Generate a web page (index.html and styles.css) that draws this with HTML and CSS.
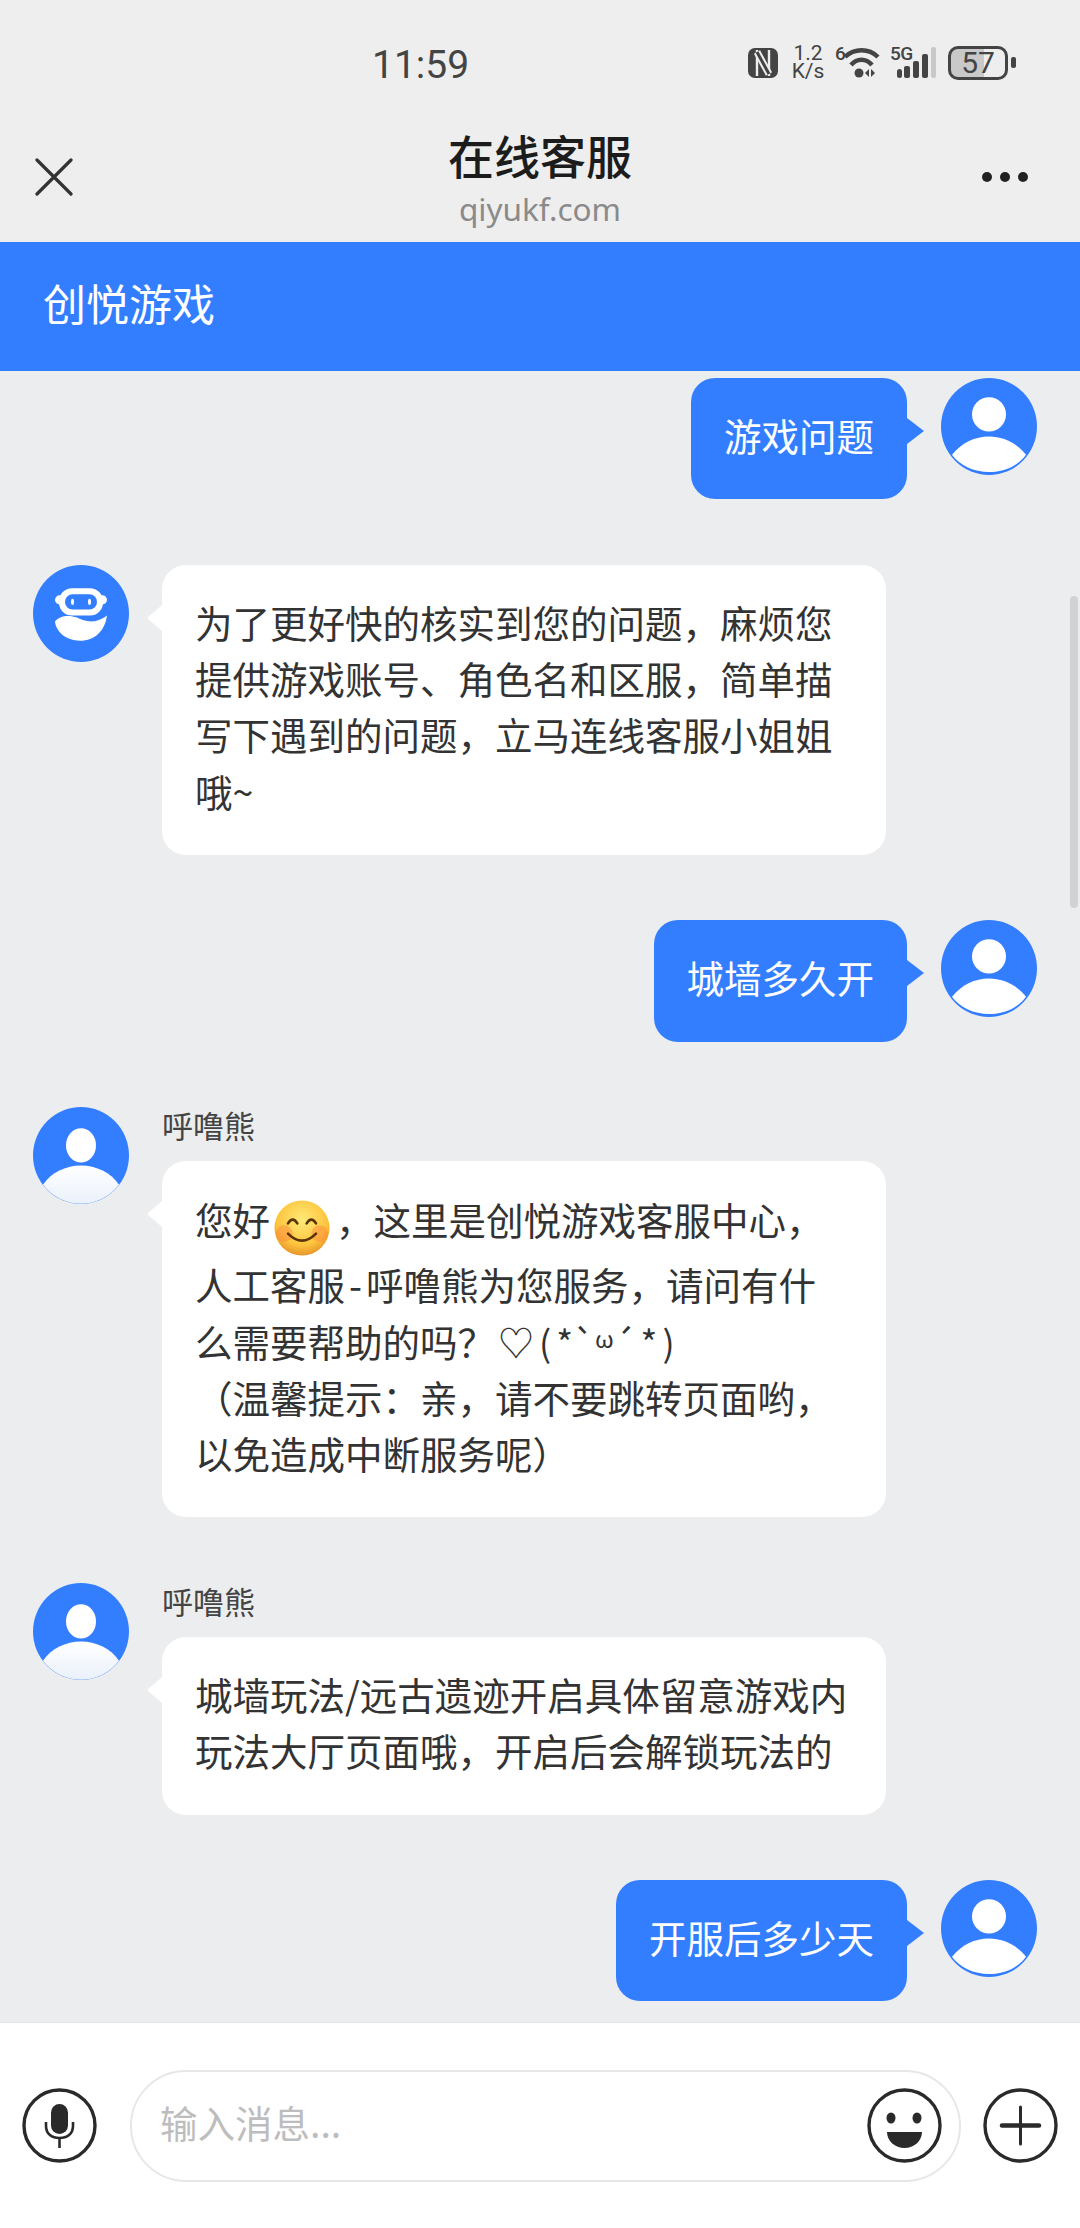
FILE: index.html
```html
<!DOCTYPE html>
<html lang="zh-CN">
<head>
  <meta charset="UTF-8">
  <meta name="viewport" content="width=device-width, initial-scale=1.0">
  <title>在线客服</title>
  <link rel="stylesheet" href="styles.css">
</head>
<body>
  <div class="status-bar">
    <span class="time">11:59</span>
    <div class="status-icons">
      <svg class="nfc" width="30" height="30" viewBox="0 0 30 30">
        <rect width="30" height="30" rx="7" fill="#444"/>
        <path d="M9 2V28M21 2V28" stroke="#eee" stroke-width="2.400"/>
        <path d="M9 4L21 26" stroke="#eee" stroke-width="7"/>
        <path d="M9 4L21 26" stroke="#444" stroke-width="3"/>
      </svg>
      <div class="speed"><span>1.2</span><span>K/s</span></div>
      <div class="wifi">
        <span class="tiny-label">6</span>
        <svg width="36" height="31" viewBox="0 0 36 31" fill="none" stroke="#444" stroke-width="4.500">
          <path d="M1 10C10 1 25 1 34 10"/>
          <path d="M7 18C13 11 22 11 28 18"/>
          <circle cx="15" cy="26" r="4.500" fill="#444" stroke="none"/>
          <path d="M25 22v8l-4-4zM27 22v8l4-4z" fill="#444" stroke="none"/>
        </svg>
      </div>
      <div class="signal">
        <span class="tiny-label">5G</span>
        <svg width="46" height="31" viewBox="0 0 46 31" fill="#444">
          <rect x="7" y="22" width="5" height="9" rx="2.500"/>
          <rect x="14" y="19" width="6" height="12" rx="2"/>
          <rect x="23" y="14" width="6" height="17" rx="2"/>
          <rect x="32" y="7" width="6" height="24" rx="2"/>
          <rect x="41" y="0" width="5" height="31" rx="2" fill="#c9c9c9"/>
        </svg>
      </div>
      <div class="battery">57</div>
      <div class="battery-nub"></div>
    </div>
  </div>

  <div class="nav-bar">
    <svg class="close-icon" width="38" height="38" viewBox="0 0 38 38" stroke="#333" stroke-width="3.200" stroke-linecap="round">
      <path d="M2 2L36 36M36 2L2 36"/>
    </svg>
    <div class="nav-title">
      <div class="nav-name">在线客服</div>
      <div class="nav-host">qiyukf.com</div>
    </div>
    <div class="more-dots"><i></i><i></i><i></i></div>
  </div>

  <header class="shop-header">创悦游戏</header>

  <main class="chat">
    <div class="scroll-thumb"></div>

    <div class="msg msg-me">
      <div class="bubble bubble-me">游戏问题</div>
      <svg class="avatar" viewBox="0 0 96 96" preserveAspectRatio="none"><use href="#me-face"/></svg>
    </div>

    <div class="msg">
      <svg class="avatar" viewBox="0 0 96 96" preserveAspectRatio="none">
        <circle cx="48" cy="48" r="48" fill="#337eff"/>
        <rect x="26" y="23" width="44" height="27" rx="13" fill="#fff"/>
        <rect x="22" y="30" width="52" height="9" rx="4.500" fill="#fff"/>
        <rect x="32" y="29" width="32" height="15" rx="7.500" fill="#337eff"/>
        <ellipse cx="39.500" cy="36.500" rx="1.500" ry="3" fill="#fff"/>
        <ellipse cx="56.500" cy="36.500" rx="1.500" ry="3" fill="#fff"/>
        <path d="M22 56C26 50 36 49 44 52C52 56 62 59 74 50C72 65 62 75 47 75C33 75 23 66 22 56Z" fill="#fff"/>
      </svg>
      <div class="msg-body">
        <div class="bubble bubble-other">为了更好快的核实到您的问题，麻烦您提供游戏账号、角色名和区服，简单描写下遇到的问题，立马连线客服小姐姐哦~</div>
      </div>
    </div>

    <div class="msg msg-me">
      <div class="bubble bubble-me">城墙多久开</div>
      <svg class="avatar" viewBox="0 0 96 96" preserveAspectRatio="none"><use href="#me-face"/></svg>
    </div>

    <div class="msg">
      <svg class="avatar" viewBox="0 0 96 96" preserveAspectRatio="none"><use href="#agent-face"/></svg>
      <div class="msg-body">
        <div class="sender">呼噜熊</div>
        <div class="bubble bubble-other">您好<svg class="smile" width="56" height="56" viewBox="0 0 60 60">
            <circle cx="30" cy="30" r="29.500" fill="url(#smile-fill)"/>
            <circle cx="11" cy="36" r="9" fill="#ff7a3c" opacity=".4"/>
            <circle cx="49" cy="36" r="9" fill="#ff7a3c" opacity=".4"/>
            <path d="M15 25Q20 17 25 25M35 25Q40 17 45 25M15 36Q30 51 45 36" fill="none" stroke="#5a3408" stroke-width="2.800" stroke-linecap="round"/>
          </svg>，这里是创悦游戏客服中心，人工客服<span class="dash">-</span>呼噜熊为您服务，请问有什<br>么需要帮助的吗？<span class="kaomoji">♡ ( *`<span class="kaomoji-mouth">ω</span>´ * )</span><br>（温馨提示：亲，请不要跳转页面哟，以免造成中断服务呢）</div>
      </div>
    </div>

    <div class="msg">
      <svg class="avatar" viewBox="0 0 96 96" preserveAspectRatio="none"><use href="#agent-face"/></svg>
      <div class="msg-body">
        <div class="sender">呼噜熊</div>
        <div class="bubble bubble-other">城墙玩法/远古遗迹开启具体留意游戏内玩法大厅页面哦，开启后会解锁玩法的</div>
      </div>
    </div>

    <div class="msg msg-me">
      <div class="bubble bubble-me">开服后多少天</div>
      <svg class="avatar" viewBox="0 0 96 96" preserveAspectRatio="none"><use href="#me-face"/></svg>
    </div>
  </main>

  <footer class="input-bar">
    <svg class="round-icon" viewBox="0 0 75 75" fill="none" stroke="#2a2a2a" stroke-width="3.400">
      <circle cx="37.500" cy="37.500" r="35.500"/>
      <rect x="29" y="16" width="17" height="30" rx="8.500" fill="#2a2a2a" stroke="none"/>
      <path d="M24 34V38C24 46 30 50 37.500 50C45 50 51 46 51 38V34M37.500 50V60" stroke-width="2.600"/>
    </svg>
    <div class="input-box">
      <span class="placeholder">输入消息...</span>
      <svg class="round-icon" viewBox="0 0 75 75" fill="none" stroke="#2a2a2a" stroke-width="3.400">
        <circle cx="37.500" cy="37.500" r="35.500"/>
        <ellipse cx="24" cy="30" rx="4.500" ry="5.500" fill="#2a2a2a" stroke="none"/>
        <ellipse cx="50" cy="30" rx="4.500" ry="5.500" fill="#2a2a2a" stroke="none"/>
        <path d="M20 44H55C55 53 47 60 37.500 60C28 60 20 53 20 44Z" fill="#2a2a2a" stroke="none"/>
      </svg>
    </div>
    <svg class="round-icon plus-icon" viewBox="0 0 75 75" fill="none" stroke="#2a2a2a" stroke-width="3.400">
      <circle cx="37.500" cy="37.500" r="35.500"/>
      <path d="M19 37.500H56" stroke-width="4.500" stroke-linecap="round"/>
      <path d="M37.500 19V56" stroke-width="3" stroke-linecap="round"/>
    </svg>
  </footer>

  <svg class="defs" width="0" height="0">
    <defs>
      <radialGradient id="smile-fill" cx="50%" cy="35%" r="65%">
        <stop offset="0" stop-color="#ffe978"/>
        <stop offset=".7" stop-color="#fdc53e"/>
        <stop offset="1" stop-color="#e8952a"/>
      </radialGradient>
      <linearGradient id="agent-body" x1="0" y1="0" x2="0" y2="1">
        <stop offset="0" stop-color="#fff"/>
        <stop offset="1" stop-color="#eaf1fb"/>
      </linearGradient>
      <g id="me-face">
        <circle cx="48" cy="48" r="48" fill="#337eff"/>
        <circle cx="48" cy="36" r="17" fill="#fff"/>
        <path d="M11 76C21 64 34 58 48 58C62 58 75 64 85 76C77 87 63 93 48 93C33 93 19 87 11 76Z" fill="#fff"/>
      </g>
      <g id="agent-face">
        <circle cx="48" cy="48" r="48" fill="#337eff"/>
        <ellipse cx="48" cy="38" rx="15" ry="17" fill="#fff"/>
        <path d="M10 77C18 65 33 58 48 58C63 58 78 65 86 77A48 48 0 0 1 10 77Z" fill="url(#agent-body)"/>
      </g>
    </defs>
  </svg>
</body>
</html>
```

FILE: styles.css
```css
* {
  box-sizing: border-box;
}
html, body {
  height: 2228px;
}
body {
  margin: 0;
  display: flex;
  flex-direction: column;
  overflow: hidden;
  font-family: "Noto Sans CJK SC", "Noto Sans", sans-serif;
  background: #ecedef;
  color: #333;
}

/* status bar */
.status-bar {
  height: 100px;
  flex: none;
  display: flex;
  align-items: flex-start;
  padding: 44px 64px 0 372px;
  background: #eee;
  color: #444;
  font-family: Roboto, sans-serif;
}
.time {
  font-size: 39px;
  line-height: 42px;
}
.status-icons {
  margin-left: auto;
  display: flex;
  align-items: flex-start;
}
.nfc {
  margin-top: 4px;
}
.speed {
  width: 34px;
  margin: 0 0 0 13px;
  display: flex;
  flex-direction: column;
  align-items: center;
  font-size: 21px;
  line-height: 18px;
}
.wifi, .signal {
  position: relative;
  height: 34px;
  display: flex;
  align-items: flex-end;
}
.wifi {
  width: 45px;
  margin-left: 10px;
  justify-content: flex-end;
}
.signal {
  width: 46px;
  margin-left: 10px;
}
.tiny-label {
  position: absolute;
  left: 0;
  top: 0;
  font-size: 19px;
  line-height: 19px;
  font-weight: 500;
  letter-spacing: -0.5px;
}
.battery {
  width: 60px;
  height: 34px;
  margin: 2px 0 0 12px;
  border: 3px solid #444;
  border-radius: 10px;
  background: linear-gradient(90deg, #c9c9c9 62%, transparent 62%);
  font-size: 30px;
  line-height: 28px;
  text-align: center;
}
.battery-nub {
  width: 5px;
  height: 11px;
  margin: 13px 0 0 3px;
  border-radius: 2px;
  background: #444;
}

/* top nav */
.nav-bar {
  height: 142px;
  flex: none;
  display: grid;
  grid-template-columns: 1fr auto 1fr;
  align-items: center;
  padding: 12px 35px 0;
  background: #eee;
}
.nav-title {
  margin-top: -3px;
  text-align: center;
}
.nav-name {
  font-size: 46px;
  line-height: 66px;
  font-weight: 500;
  color: #1c1c1c;
}
.nav-host {
  font-family: "Noto Sans", sans-serif;
  font-size: 31.500px;
  line-height: 44px;
  color: #8a8a8a;
}
.more-dots {
  justify-self: end;
  margin-right: 17px;
  display: flex;
  gap: 8px;
}
.more-dots i {
  width: 10px;
  height: 10px;
  border-radius: 50%;
  background: #222;
}

.shop-header {
  height: 129px;
  flex: none;
  padding-left: 43px;
  background: #337eff;
  color: #fff;
  font-size: 43px;
  line-height: 120px;
}

/* messages */
.chat {
  position: relative;
  flex: 1;
  min-height: 0;
  overflow: hidden;
  display: flex;
  flex-direction: column;
  gap: 65.500px;
  padding: 7px 43px 0 33px;
  background: #ecedef;
}
.scroll-thumb {
  position: absolute;
  top: 225px;
  right: 2px;
  width: 8px;
  height: 312px;
  border-radius: 4px;
  background: #d1d2d4;
}
.msg {
  display: flex;
  align-items: flex-start;
  gap: 33px;
}
.msg-me {
  justify-content: flex-end;
  gap: 34px;
}
.avatar {
  width: 96px;
  height: 97px;
  flex: none;
}
.msg-body {
  width: 724px;
}
.sender {
  height: 54px;
  font-size: 31px;
  line-height: 36px;
  color: #444;
}
.bubble {
  position: relative;
  padding: 29px 33px 36px;
  border-radius: 24px;
  font-size: 37.500px;
  line-height: 56.300px;
}
.bubble::after {
  content: "";
  position: absolute;
  top: 40px;
  border: 13px solid transparent;
}
.bubble-other {
  background: #fff;
  color: #333;
}
.bubble-other::after {
  left: -28px;
  border-right: 15px solid #fff;
  border-left-width: 13px;
}
.bubble-me {
  background: #337eff;
  color: #fff;
}
.bubble-me::after {
  right: -31px;
  border-left: 17px solid #337eff;
  border-right-width: 14px;
}
.smile {
  vertical-align: -21px;
  margin: 10px 6px 0 4px;
}
.dash {
  margin: 0 4px;
}
.kaomoji {
  margin-left: 3px;
  font-size: 36px;
  word-spacing: -3px;
}
.kaomoji-mouth {
  font-size: 24px;
  line-height: 1;
  vertical-align: 9px;
}

/* bottom input */
.input-bar {
  height: 206px;
  flex: none;
  display: flex;
  align-items: center;
  padding-left: 22px;
  background: #fff;
  border-top: 1px solid #e4e4e4;
}
.round-icon {
  width: 75px;
  height: 75px;
  flex: none;
}
.input-box {
  width: 831px;
  height: 112px;
  margin-left: 33px;
  display: flex;
  align-items: center;
  justify-content: space-between;
  padding: 0 17px 0 28px;
  border: 2px solid #e7e7e7;
  border-radius: 56px;
}
.placeholder {
  margin-top: -9px;
  font-size: 37.500px;
  color: #bdbdbd;
}
.plus-icon {
  margin-left: 22px;
}
.defs {
  position: absolute;
}
```
